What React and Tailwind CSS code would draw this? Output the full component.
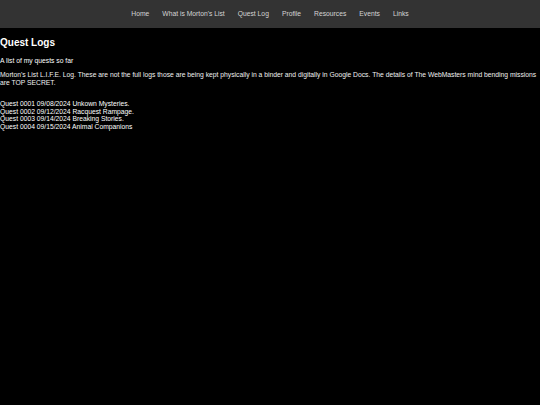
export default function App() {
  const links = ["Home", "What is Morton's List", "Quest Log", "Profile", "Resources", "Events", "Links"];
  return (
    <div className="min-h-[405px] bg-black text-white text-[6.75px] leading-[7.6px]" style={{ fontFamily: '"Liberation Sans", Arial, sans-serif' }}>
      <nav className="h-[28px] bg-[#333333] flex items-center justify-center gap-[13px]">
        {links.map((l) => (
          <span key={l} className="text-[#d4d4d4]">{l}</span>
        ))}
      </nav>
      <h2 className="text-[10px] leading-[11.5px] font-bold text-white mt-[9px] mb-[8.3px]">Quest Logs</h2>
      <p className="my-[6.75px]">A list of my quests so far</p>
      <p className="my-[6.75px] text-[#f0f0f0]">Morton's List L.I.F.E. Log. These are not the full logs those are being kept physically in a binder and digitally in Google Docs. The details of The WebMasters mind bending missions are TOP SECRET.</p>
      <div className="h-[7px]" />
      <div>
        <div>Quest 0001 09/08/2024 Unkown Mysteries.</div>
        <div>Quest 0002 09/12/2024 Racquest Rampage.</div>
        <div>Quest 0003 09/14/2024 Breaking Stories.</div>
        <div>Quest 0004 09/15/2024 Animal Companions</div>
      </div>
    </div>
  );
}
